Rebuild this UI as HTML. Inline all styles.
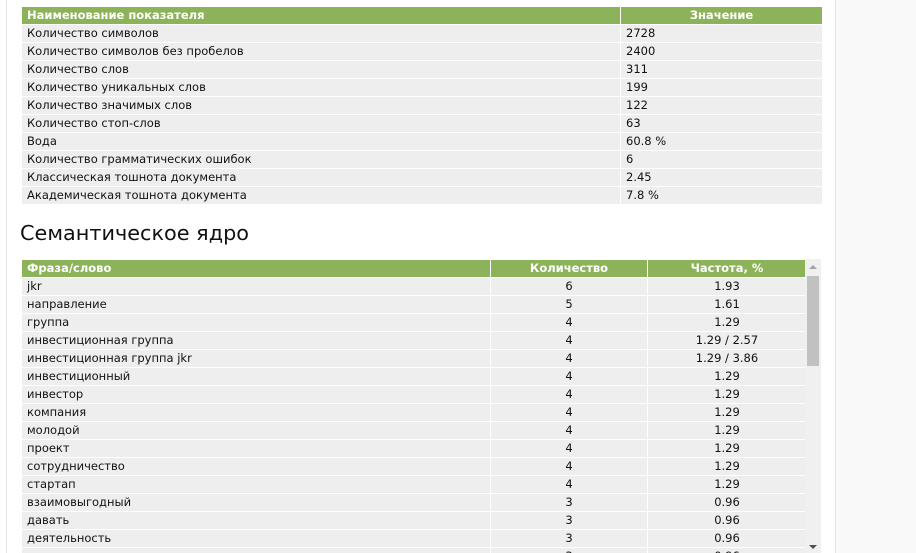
<!DOCTYPE html>
<html><head><meta charset="utf-8"><style>
body{margin:0;width:916px;height:553px;overflow:hidden;background:#fff;font-family:"DejaVu Sans","Liberation Sans",sans-serif;font-size:11.5px;color:#111;position:relative}
.lline{position:absolute;left:6px;top:0;width:1px;height:553px;background:#e8e8e8}
.right{position:absolute;left:835px;top:0;width:81px;height:553px;background:#f9f9f9;border-left:1px solid #e3e3e3}
table{border-collapse:collapse;position:absolute;left:21px;table-layout:fixed}
td,th{height:17px;padding:0 0 0 5px;border:1px solid #fff;line-height:17px;white-space:nowrap;overflow:hidden}
th{background:#8db35a;color:#fff;font-weight:bold;text-align:left}
td{background:#eeeeee}
th.c{text-align:center;padding:0}
td.c{text-align:center;padding:0}
h2{position:absolute;left:20px;top:221px;margin:0;font-weight:normal;font-size:20.8px;color:#111}
.wrap{position:absolute;left:21px;top:259px;width:800px;height:294px;overflow:hidden}
.wrap table{left:0;top:0}
.sb{position:absolute;left:805px;top:259px;width:16px;height:294px;background:#f0f0f0}
.thumb{position:absolute;left:2px;top:17px;width:12px;height:90px;background:#c1c1c1}
</style></head><body>
<div class="lline"></div>
<div class="right"></div>
<table style="top:6px;width:801px">
<col style="width:599px"><col style="width:202px">
<tr><th>Наименование показателя</th><th class="c">Значение</th></tr>
<tr><td>Количество символов</td><td>2728</td></tr>
<tr><td>Количество символов без пробелов</td><td>2400</td></tr>
<tr><td>Количество слов</td><td>311</td></tr>
<tr><td>Количество уникальных слов</td><td>199</td></tr>
<tr><td>Количество значимых слов</td><td>122</td></tr>
<tr><td>Количество стоп-слов</td><td>63</td></tr>
<tr><td>Вода</td><td>60.8 %</td></tr>
<tr><td>Количество грамматических ошибок</td><td>6</td></tr>
<tr><td>Классическая тошнота документа</td><td>2.45</td></tr>
<tr><td>Академическая тошнота документа</td><td>7.8 %</td></tr>
</table>
<h2>Семантическое ядро</h2>
<div class="wrap">
<table style="width:785px">
<col style="width:469px"><col style="width:157px"><col style="width:159px">
<tr><th>Фраза/слово</th><th class="c">Количество</th><th class="c">Частота, %</th></tr>
<tr><td>jkr</td><td class="c">6</td><td class="c">1.93</td></tr>
<tr><td>направление</td><td class="c">5</td><td class="c">1.61</td></tr>
<tr><td>группа</td><td class="c">4</td><td class="c">1.29</td></tr>
<tr><td>инвестиционная группа</td><td class="c">4</td><td class="c">1.29 / 2.57</td></tr>
<tr><td>инвестиционная группа jkr</td><td class="c">4</td><td class="c">1.29 / 3.86</td></tr>
<tr><td>инвестиционный</td><td class="c">4</td><td class="c">1.29</td></tr>
<tr><td>инвестор</td><td class="c">4</td><td class="c">1.29</td></tr>
<tr><td>компания</td><td class="c">4</td><td class="c">1.29</td></tr>
<tr><td>молодой</td><td class="c">4</td><td class="c">1.29</td></tr>
<tr><td>проект</td><td class="c">4</td><td class="c">1.29</td></tr>
<tr><td>сотрудничество</td><td class="c">4</td><td class="c">1.29</td></tr>
<tr><td>стартап</td><td class="c">4</td><td class="c">1.29</td></tr>
<tr><td>взаимовыгодный</td><td class="c">3</td><td class="c">0.96</td></tr>
<tr><td>давать</td><td class="c">3</td><td class="c">0.96</td></tr>
<tr><td>деятельность</td><td class="c">3</td><td class="c">0.96</td></tr>
<tr><td>идея</td><td class="c">3</td><td class="c">0.96</td></tr>
</table>
</div>
<div class="sb"><div style="position:absolute;left:4px;top:6px;width:0;height:0;border-left:4px solid transparent;border-right:4px solid transparent;border-bottom:4px solid #a3a3a3"></div><div class="thumb"></div><div style="position:absolute;left:4px;top:286px;width:0;height:0;border-left:4px solid transparent;border-right:4px solid transparent;border-top:4px solid #505050"></div></div>
</body></html>
